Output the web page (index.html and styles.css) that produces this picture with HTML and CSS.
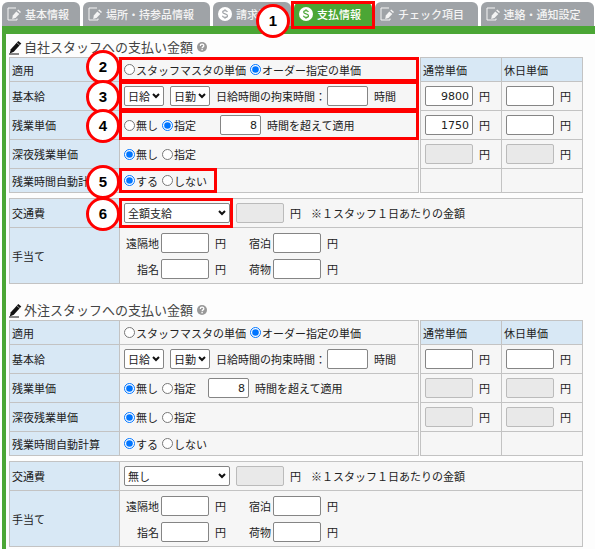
FILE: index.html
```
<!DOCTYPE html>
<html lang="ja">
<head>
    <meta charset="UTF-8">
    <meta name="viewport" content="width=device-width, initial-scale=1.0">
    <title>支払情報</title>
    <link rel="stylesheet" href="styles.css">
</head>
<body>
    <!-- Shared icons -->
    <svg class="symbols" aria-hidden="true">
        <symbol id="icon-edit" viewBox="0 0 14 14">
            <path d="M9 1H1v12h9v-1.500" fill="none" stroke="currentColor" stroke-width="1"/>
            <path d="M9.300 4.500l3 2.600-3.800 4-3.300 1 .6-3.500z" fill="currentColor"/>
            <path d="M10.200 3.500l1-1 2.800 2.500-1 1.100z" fill="currentColor"/>
        </symbol>
        <symbol id="icon-money" viewBox="0 0 14 14">
            <circle cx="7" cy="7" r="7" fill="#fff"/>
            <path d="M9.400 5C9 3.900 8 3.700 7 3.700c-1.400 0-2.300.6-2.300 1.600C4.700 7.600 9.500 6.300 9.500 8.700c0 1-1 1.700-2.500 1.700-1.300 0-2.200-.5-2.600-1.600M7 2.300v1.400M7 10.400v1.400" fill="none" stroke="currentColor" stroke-width="1.200"/>
        </symbol>
        <symbol id="icon-pencil" viewBox="0 0 13 15">
            <path d="M9.300 1l3 2.600-7.500 8.200-4 1.700 1-4.200z" fill="#111"/>
            <path d="M7.700 2.600l3.200 2.800" stroke="#fff" stroke-width=".6"/>
            <path d="M0 14h10" stroke="#111" stroke-width="1"/>
        </symbol>
        <symbol id="icon-help" viewBox="0 0 10 10">
            <circle cx="5" cy="5" r="5" fill="#999"/>
            <path d="M3.300 3.900c0-2.200 3.500-2.200 3.500-.2 0 1.200-1.700 1.200-1.700 2.500" fill="none" stroke="#fff" stroke-width="1.300"/>
            <rect x="4.400" y="7" width="1.400" height="1.300" fill="#fff"/>
        </symbol>
    </svg>

    <nav class="tabs">
        <a class="tab" href="#"><svg class="tab-icon"><use href="#icon-edit"/></svg>基本情報</a>
        <a class="tab long" href="#"><svg class="tab-icon"><use href="#icon-edit"/></svg>場所・持参品情報</a>
        <a class="tab money" href="#"><svg class="tab-icon"><use href="#icon-money"/></svg>請求情報</a>
        <a class="tab money active" href="#"><svg class="tab-icon"><use href="#icon-money"/></svg>支払情報<span class="frame tab-frame"></span><span class="step tab-step">1</span></a>
        <a class="tab medium" href="#"><svg class="tab-icon"><use href="#icon-edit"/></svg>チェック項目</a>
        <a class="tab medium" href="#"><svg class="tab-icon"><use href="#icon-edit"/></svg>連絡・通知設定</a>
    </nav>

    <main class="content">
        <!-- Own staff -->
        <section class="payment">
            <h2 class="title"><svg class="title-icon"><use href="#icon-pencil"/></svg>自社スタッフへの支払い金額<button class="help" type="button" aria-label="ヘルプ"><svg><use href="#icon-help"/></svg></button></h2>
            <div class="rates">
                <table class="grid conditions">
                    <tr class="short">
                        <th>適用</th>
                        <td><div class="row">
                            <label class="option"><input type="radio" name="own_apply">スタッフマスタの単価</label>
                            <label class="option"><input type="radio" name="own_apply" checked>オーダー指定の単価</label>
                        </div><span class="frame"></span><span class="step high">2</span></td>
                    </tr>
                    <tr>
                        <th>基本給</th>
                        <td><div class="row wide">
                            <select class="unit" aria-label="給与区分"><option>日給</option></select>
                            <select class="unit" aria-label="勤務区分"><option>日勤</option></select>
                            <label class="option">日給時間の拘束時間：<input class="hours" type="text"></label>
                            <span>時間</span>
                        </div><span class="frame"></span><span class="step">3</span></td>
                    </tr>
                    <tr>
                        <th>残業単価</th>
                        <td><div class="row">
                            <label class="option"><input type="radio" name="own_over">無し</label>
                            <label class="option"><input type="radio" name="own_over" checked>指定</label>
                            <label class="over far"><input class="hours" type="text" value="8">時間を超えて適用</label>
                        </div><span class="frame"></span><span class="step">4</span></td>
                    </tr>
                    <tr>
                        <th>深夜残業単価</th>
                        <td><div class="row">
                            <label class="option"><input type="radio" name="own_night" checked>無し</label>
                            <label class="option"><input type="radio" name="own_night">指定</label>
                        </div></td>
                    </tr>
                    <tr class="short">
                        <th>残業時間自動計算</th>
                        <td><div class="row">
                            <label class="option"><input type="radio" name="own_auto" checked>する</label>
                            <label class="option"><input type="radio" name="own_auto">しない</label>
                        </div><span class="frame auto-frame"></span><span class="step">5</span></td>
                    </tr>
                </table>
                <table class="grid prices">
                    <tr class="short"><th>通常単価</th><th>休日単価</th></tr>
                    <tr>
                        <td><label class="yen"><input type="text" value="9800">円</label></td>
                        <td><label class="yen"><input type="text">円</label></td>
                    </tr>
                    <tr>
                        <td><label class="yen"><input type="text" value="1750">円</label></td>
                        <td><label class="yen"><input type="text">円</label></td>
                    </tr>
                    <tr>
                        <td><label class="yen"><input type="text" disabled>円</label></td>
                        <td><label class="yen"><input type="text" disabled>円</label></td>
                    </tr>
                    <tr class="short"><td></td><td></td></tr>
                </table>
            </div>
            <table class="grid extras">
                <tr>
                    <th>交通費</th>
                    <td><div class="row wide">
                        <select class="travel" aria-label="交通費"><option>全額支給</option><option>無し</option></select>
                        <label class="yen"><input type="text" disabled>円</label>
                        <span class="note">※１スタッフ１日あたりの金額</span>
                    </div><span class="frame travel-frame"></span><span class="step">6</span></td>
                </tr>
                <tr class="tall">
                    <th>手当て</th>
                    <td><div class="allowances">
                        <label class="yen">遠隔地<input type="text">円</label>
                        <label class="yen">宿泊<input type="text">円</label>
                        <label class="yen">指名<input type="text">円</label>
                        <label class="yen">荷物<input type="text">円</label>
                    </div></td>
                </tr>
            </table>
        </section>

        <!-- Outsourced staff -->
        <section class="payment">
            <h2 class="title"><svg class="title-icon"><use href="#icon-pencil"/></svg>外注スタッフへの支払い金額<button class="help" type="button" aria-label="ヘルプ"><svg><use href="#icon-help"/></svg></button></h2>
            <div class="rates">
                <table class="grid conditions">
                    <tr class="short">
                        <th>適用</th>
                        <td><div class="row">
                            <label class="option"><input type="radio" name="out_apply">スタッフマスタの単価</label>
                            <label class="option"><input type="radio" name="out_apply" checked>オーダー指定の単価</label>
                        </div></td>
                    </tr>
                    <tr>
                        <th>基本給</th>
                        <td><div class="row wide">
                            <select class="unit" aria-label="給与区分"><option>日給</option></select>
                            <select class="unit" aria-label="勤務区分"><option>日勤</option></select>
                            <label class="option">日給時間の拘束時間：<input class="hours" type="text"></label>
                            <span>時間</span>
                        </div></td>
                    </tr>
                    <tr>
                        <th>残業単価</th>
                        <td><div class="row">
                            <label class="option"><input type="radio" name="out_over" checked>無し</label>
                            <label class="option"><input type="radio" name="out_over">指定</label>
                            <label class="over"><input class="hours" type="text" value="8">時間を超えて適用</label>
                        </div></td>
                    </tr>
                    <tr>
                        <th>深夜残業単価</th>
                        <td><div class="row">
                            <label class="option"><input type="radio" name="out_night" checked>無し</label>
                            <label class="option"><input type="radio" name="out_night">指定</label>
                        </div></td>
                    </tr>
                    <tr class="short">
                        <th>残業時間自動計算</th>
                        <td><div class="row">
                            <label class="option"><input type="radio" name="out_auto" checked>する</label>
                            <label class="option"><input type="radio" name="out_auto">しない</label>
                        </div></td>
                    </tr>
                </table>
                <table class="grid prices">
                    <tr class="short"><th>通常単価</th><th>休日単価</th></tr>
                    <tr>
                        <td><label class="yen"><input type="text">円</label></td>
                        <td><label class="yen"><input type="text">円</label></td>
                    </tr>
                    <tr>
                        <td><label class="yen"><input type="text" disabled>円</label></td>
                        <td><label class="yen"><input type="text" disabled>円</label></td>
                    </tr>
                    <tr>
                        <td><label class="yen"><input type="text" disabled>円</label></td>
                        <td><label class="yen"><input type="text" disabled>円</label></td>
                    </tr>
                    <tr class="short"><td></td><td></td></tr>
                </table>
            </div>
            <table class="grid extras">
                <tr>
                    <th>交通費</th>
                    <td><div class="row wide">
                        <select class="travel" aria-label="交通費"><option>無し</option><option>全額支給</option></select>
                        <label class="yen"><input type="text" disabled>円</label>
                        <span class="note">※１スタッフ１日あたりの金額</span>
                    </div></td>
                </tr>
                <tr class="tall">
                    <th>手当て</th>
                    <td><div class="allowances">
                        <label class="yen">遠隔地<input type="text">円</label>
                        <label class="yen">宿泊<input type="text">円</label>
                        <label class="yen">指名<input type="text">円</label>
                        <label class="yen">荷物<input type="text">円</label>
                    </div></td>
                </tr>
            </table>
        </section>
    </main>
</body>
</html>
```
FILE: styles.css
```
* {
    margin: 0;
    padding: 0;
    box-sizing: border-box;
}

body {
    min-height: 100vh;
    display: flex;
    flex-direction: column;
    padding: 2px 0 0 2px;
    background: #fff;
    color: #222;
    font-family: "Noto Sans CJK JP", sans-serif;
    font-size: 11px;
    line-height: 16px;
}

.symbols {
    position: absolute;
    width: 0;
    height: 0;
}

/* Tabs */
.tabs {
    display: flex;
    gap: 3px;
    padding-right: 1px;
}

.tab {
    position: relative;
    flex: 4 0 auto;
    display: flex;
    align-items: center;
    gap: 4px;
    height: 24px;
    padding: 0 6px 0 5px;
    border-radius: 6px 6px 0 0;
    background: #9fa3a7;
    color: #f4f4f4;
    font-weight: 500;
    text-decoration: none;
    white-space: nowrap;
}

.tab.medium {
    flex-grow: 6;
}

.tab.long {
    flex-grow: 8;
}

.tab.active {
    background: #4ba635;
    color: #fff;
}

.tab-icon {
    width: 14px;
    height: 14px;
    flex: none;
    color: #f4f4f4;
}

.tab.money .tab-icon {
    color: #9fa3a7;
}

.tab.active .tab-icon {
    color: #4ba635;
}

.content {
    flex: 1;
    padding: 3px 12px 2px 3px;
    border-top: 8px solid #4ba635;
    border-left: 4px solid #4ba635;
    background: #fdfdfd;
}

.payment + .payment {
    margin-top: 16px;
}

.title {
    display: flex;
    align-items: center;
    height: 20px;
    color: #444;
    font-size: 13px;
    font-weight: 400;
}

.title-icon {
    width: 13px;
    height: 15px;
    margin-right: 2px;
}

.help {
    display: flex;
    margin-left: 4px;
    border: none;
    background: none;
    cursor: pointer;
}

.help svg {
    width: 10px;
    height: 10px;
}

/* Tables */
.rates {
    display: flex;
    gap: 1px;
    margin-bottom: 5px;
}

.grid {
    table-layout: fixed;
    border-collapse: collapse;
    background: #f6f6f6;
}

.conditions {
    flex: 1;
}

.prices {
    width: 163px;
}

.extras {
    width: 100%;
}

.grid tr {
    height: 29px;
}

.grid tr.short {
    height: 24px;
}

.grid tr.tall {
    height: 56px;
}

.grid th,
.grid td {
    position: relative;
    border: 1px solid #c3c3c3;
    text-align: left;
    vertical-align: middle;
    white-space: nowrap;
}

.grid th {
    padding-left: 2px;
    background: #d8e8f5;
    font-weight: 400;
}

.grid td {
    padding-left: 4px;
}

.conditions th,
.extras th {
    width: 110px;
}

/* Form controls */
.row {
    display: flex;
    align-items: center;
    gap: 4px;
}

.row.wide {
    gap: 6px;
}

.option {
    display: flex;
    align-items: center;
    gap: 1px;
}

.over,
.yen {
    display: flex;
    align-items: center;
    gap: 6px;
}

.over {
    margin-left: 8px;
}

.over.far {
    margin-left: 20px;
}

.note {
    margin-left: 4px;
}

input[type="radio"] {
    width: 11px;
    height: 11px;
}

input[type="text"] {
    width: 48px;
    height: 20px;
    padding: 0 3px;
    border: 1px solid #858585;
    border-radius: 2px;
    background: #fff;
    color: #222;
    font-family: "DejaVu Sans", sans-serif;
    font-size: 11px;
    text-align: right;
}

input[type="text"].hours {
    width: 41px;
}

input[type="text"]:disabled {
    border-color: #bbb;
    background: #e9e9e9;
}

select {
    appearance: none;
    height: 20px;
    padding-left: 3px;
    border: 1px solid #858585;
    border-radius: 2px;
    background: #fff url("data:image/svg+xml,%3Csvg xmlns='http://www.w3.org/2000/svg' width='8' height='6'%3E%3Cpath d='M1 1l3 3 3-3' fill='none' stroke='%23111' stroke-width='2'/%3E%3C/svg%3E") no-repeat right 3px center;
    color: #222;
    font-family: inherit;
    font-size: 11px;
}

.unit {
    width: 40px;
}

.travel {
    width: 106px;
}

.allowances {
    display: grid;
    grid-template-columns: auto auto;
    justify-content: start;
    justify-items: end;
    gap: 6px 23px;
    padding-left: 2px;
}

.allowances .yen input {
    margin-left: -4px;
}

/* Numbered guide */
.frame {
    position: absolute;
    inset: -1px;
    z-index: 1;
    border: 3px solid #f00;
    pointer-events: none;
}

.tab-frame {
    inset: -1px -3px -3px;
}

.auto-frame {
    right: auto;
    width: 98px;
}

.travel-frame {
    right: auto;
    width: 114px;
}

.step {
    position: absolute;
    top: calc(50% - 16px);
    left: -34px;
    z-index: 2;
    width: 34px;
    height: 34px;
    border: 3px solid #f00;
    border-radius: 50%;
    background: #fff;
    color: #000;
    font-family: "Liberation Sans", sans-serif;
    font-size: 15px;
    font-weight: 700;
    line-height: 28px;
    text-align: center;
}

.step.high {
    top: -8px;
}

.tab-step {
    left: -38px;
    top: 2px;
}
```
